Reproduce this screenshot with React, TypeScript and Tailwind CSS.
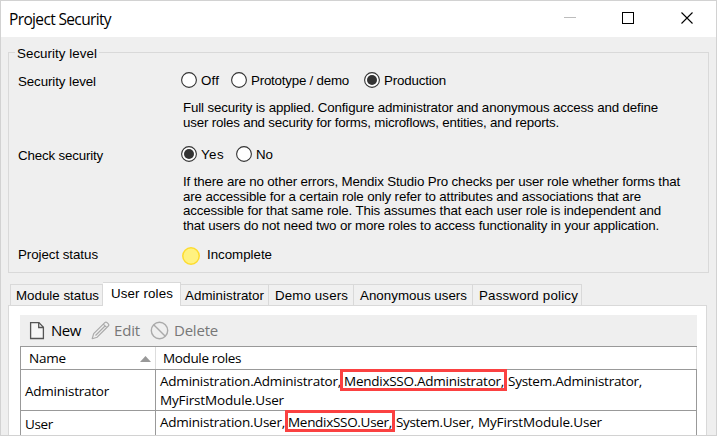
import { useLayoutEffect, useRef, useState } from "react";
import type { ReactNode } from "react";

const UI = "font-['Open_Sans','Noto_Sans',sans-serif]";

/** A single line of text whose tracking is adjusted to fill a given width. */
function Line({ w, className = "", children }: { w: number; className?: string; children: string }) {
  const ref = useRef<HTMLSpanElement>(null);
  const [spacing, setSpacing] = useState(0);
  useLayoutEffect(() => {
    const natural = ref.current!.getBoundingClientRect().width;
    setSpacing((w - natural) / children.length);
  }, [w, children]);
  return (
    <span className={"block w-max whitespace-pre " + className}>
      <span ref={ref} style={{ letterSpacing: spacing }}>
        {children}
      </span>
    </span>
  );
}

function Radio({ checked = false, label, w }: { checked?: boolean; label: string; w: number }) {
  return (
    <label className="flex h-4 items-center gap-1">
      <svg className="size-4 shrink-0" viewBox="0 0 16 16">
        <circle cx="8" cy="8" r="7.4" fill="#fff" stroke="#333" strokeWidth="1.1" />
        {checked && <circle cx="8" cy="8" r="5" fill="#333" />}
      </svg>
      <Line w={w} className="pt-[2px]">{label}</Line>
    </label>
  );
}

function Tab({ className, label, w }: { className: string; label: string; w: number }) {
  return (
    <div className={"mt-[2px] h-[21px] border-t border-r border-[#d9d9d9] bg-[#f0f0f0] leading-[21px] " + className}>
      <Line w={w}>{label}</Line>
    </div>
  );
}

function Boxed({ className, children }: { className: string; children: ReactNode }) {
  return (
    <div className="relative">
      {children}
      <div className={"absolute border-3 border-[#fb4141] " + className} />
    </div>
  );
}

export default function App() {
  return (
    <div className="flex h-[436px] w-[717px] flex-col overflow-hidden border border-[#d2d2d2] bg-[#efefef] font-['Liberation_Sans',Arial,sans-serif] text-[13.33px] text-black">
      <header className={"flex h-9 shrink-0 items-center bg-white pl-2 " + UI}>
        <Line w={102} className="text-[15.5px] leading-[34px]">Project Security</Line>
        <svg className="ml-auto mr-[23px] h-4 w-[131px]" viewBox="0 0 131 16" fill="none" shapeRendering="crispEdges">
          <path d="M2 6.5h12" stroke="#bcbcbc" />
          <path d="M60.500 1.500h11v11h-11z" stroke="#000" />
          <path d="M119.500 1.500l11 11M130.500 1.500l-11 11" stroke="#000" strokeWidth="1.1" shapeRendering="auto" />
        </svg>
      </header>

      <section className="mt-[15px] ml-[7px] h-[221px] w-[701px] shrink-0 border border-[#d9d9d9]">
        <div className="-mt-2 ml-1.5 h-4 w-[84px] bg-[#efefef] pt-px pl-[2px] leading-4">
          <Line w={80}>Security level</Line>
        </div>
        <div className="mt-[11px] flex h-4 items-center">
          <div className="w-[172px] pt-1 pl-[9px]">
            <Line w={78}>Security level</Line>
          </div>
          <Radio label="Off" w={18} />
          <div className="ml-3"><Radio label="Prototype / demo" w={98} /></div>
          <div className="ml-[15px]"><Radio checked label="Production" w={62} /></div>
        </div>
        <div className="mt-[12px] ml-[174px] leading-[15px]">
          <Line w={475}>Full security is applied. Configure administrator and anonymous access and define</Line>
          <Line w={376}>user roles and security for forms, microflows, entities, and reports.</Line>
        </div>
        <div className="mt-4 flex h-4 items-center">
          <div className="w-[172px] pt-1 pl-[9px]">
            <Line w={85}>Check security</Line>
          </div>
          <Radio checked label="Yes" w={23} />
          <div className="ml-3"><Radio label="No" w={17} /></div>
        </div>
        <div className="mt-[13px] ml-[174px] leading-[14.7px]">
          <Line w={497}>If there are no other errors, Mendix Studio Pro checks per user role whether forms that</Line>
          <Line w={458}>are accessible for a certain role only refer to attributes and associations that are</Line>
          <Line w={478}>accessible for that same role. This assumes that each user role is independent and</Line>
          <Line w={476}>that users do not need two or more roles to access functionality in your application.</Line>
        </div>
        <div className="mt-[12px] flex h-[18px] items-center">
          <div className="w-[173px] pt-px pl-[9px]">
            <Line w={80}>Project status</Line>
          </div>
          <svg className="mt-[3px] size-[18px]" viewBox="0 0 18 18">
            <circle cx="9" cy="9" r="8.200" fill="#fff280" stroke="#fddc2f" strokeWidth="1.500" />
          </svg>
          <div className="ml-[7px] pt-px"><Line w={65}>Incomplete</Line></div>
        </div>
      </section>

      <nav className="mt-[9px] ml-[9px] flex h-[23px] shrink-0">
        <Tab className="w-[93px] border-l pl-[5px]" label="Module status" w={83} />
        <div className="z-10 h-6 w-[78px] border-t border-r border-[#d9d9d9] bg-white pl-2 leading-[21px]">
          <Line w={62}>User roles</Line>
        </div>
        <Tab className="w-[88px] pl-1" label="Administrator" w={79} />
        <Tab className="w-[85px] pl-[6px]" label="Demo users" w={73} />
        <Tab className="w-[119px] pl-[6px]" label="Anonymous users" w={107} />
        <Tab className="w-[109px] pl-[6px]" label="Password policy" w={99} />
      </nav>

      <main className="ml-[7px] w-[699px] grow border-x border-t border-[#d9d9d9] bg-white pt-[9px] pl-[11px]">
        <div className={"flex h-[31px] w-[677px] items-center bg-[#efefef] pl-[9px] text-[15px] " + UI}>
          <svg className="h-[19px] w-4" viewBox="0 0 16 19" fill="none" stroke="#555" strokeWidth="1.300">
            <path d="M1.600 1.600h8.300l4.500 4.700v11.200H1.600z" fill="#f6f6f6" />
            <path d="M9.700 1.600v4.900h4.700" />
          </svg>
          <div className="ml-[6px]"><Line w={30}>New</Line></div>
          <svg className="ml-[10px] size-[19px]" viewBox="0 0 19 19" fill="none" stroke="#aaa" strokeWidth="1.200" strokeLinejoin="round">
            <path d="M1.200 17.700l1.500-5L13.800 1.600q1.100-1.100 2.300 0l1.200 1.200q1 1.100 0 2.200L6.200 16.200zM12.300 3.100l3.500 3.500M4.500 14.500l9.500-9.500" />
          </svg>
          <div className="ml-1 text-[#777]"><Line w={26}>Edit</Line></div>
          <svg className="ml-[10px] size-[19px]" viewBox="0 0 19 19" fill="none" stroke="#aaa" strokeWidth="1.400">
            <circle cx="9.500" cy="9.500" r="8.200" />
            <path d="M3.700 3.700l11.600 11.600" />
          </svg>
          <div className="ml-[5px] text-[#777]"><Line w={44}>Delete</Line></div>
        </div>
        <div className={"w-[677px] border-t border-l border-[#999] text-[13.5px] " + UI}>
          <div className="flex h-[22px] items-center border-r border-[#ddd] leading-[22px]">
            <div className="flex h-full w-[135px] items-center justify-between border-r border-[#ddd] pr-1 pl-2">
              <Line w={37}>Name</Line>
              <svg className="mt-px h-[6px] w-[11px]" viewBox="0 0 11 6"><path d="M0 6l5.500-6L11 6z" fill="#999" /></svg>
            </div>
            <div className="pl-[7px]"><Line w={78}>Module roles</Line></div>
          </div>
          <div className="flex h-[41px] border-t border-r border-[#999]">
            <div className="flex w-[135px] items-center border-r border-[#999] pt-[3px] pl-1">
              <Line w={84}>Administrator</Line>
            </div>
            <div className="pt-[2px] pl-1 leading-[19px]">
              <div className="flex">
                <div className="w-[184px]"><Line w={181}>Administration.Administrator,</Line></div>
                <Boxed className="-top-[3px] -left-1 h-[22px] w-[167px]"><Line w={160}>MendixSSO.Administrator,</Line></Boxed>
                <div className="ml-1"><Line w={134}>System.Administrator,</Line></div>
              </div>
              <Line w={124}>MyFirstModule.User</Line>
            </div>
          </div>
          <div className="flex h-[26px] border-t border-r border-[#999]">
            <div className="w-[135px] border-r border-[#999] pt-[3px] pl-1 leading-[21px]">
              <Line w={28}>User</Line>
            </div>
            <div className="flex pt-[2px] pl-1 leading-[19px]">
              <div className="w-[128px]"><Line w={125}>Administration.User,</Line></div>
              <Boxed className="-top-[3px] -left-[3px] h-[22px] w-[110px]"><Line w={104}>MendixSSO.User,</Line></Boxed>
              <div className="ml-1"><Line w={78}>System.User,</Line></div>
              <div className="ml-1"><Line w={124}>MyFirstModule.User</Line></div>
            </div>
          </div>
        </div>
      </main>
    </div>
  );
}
